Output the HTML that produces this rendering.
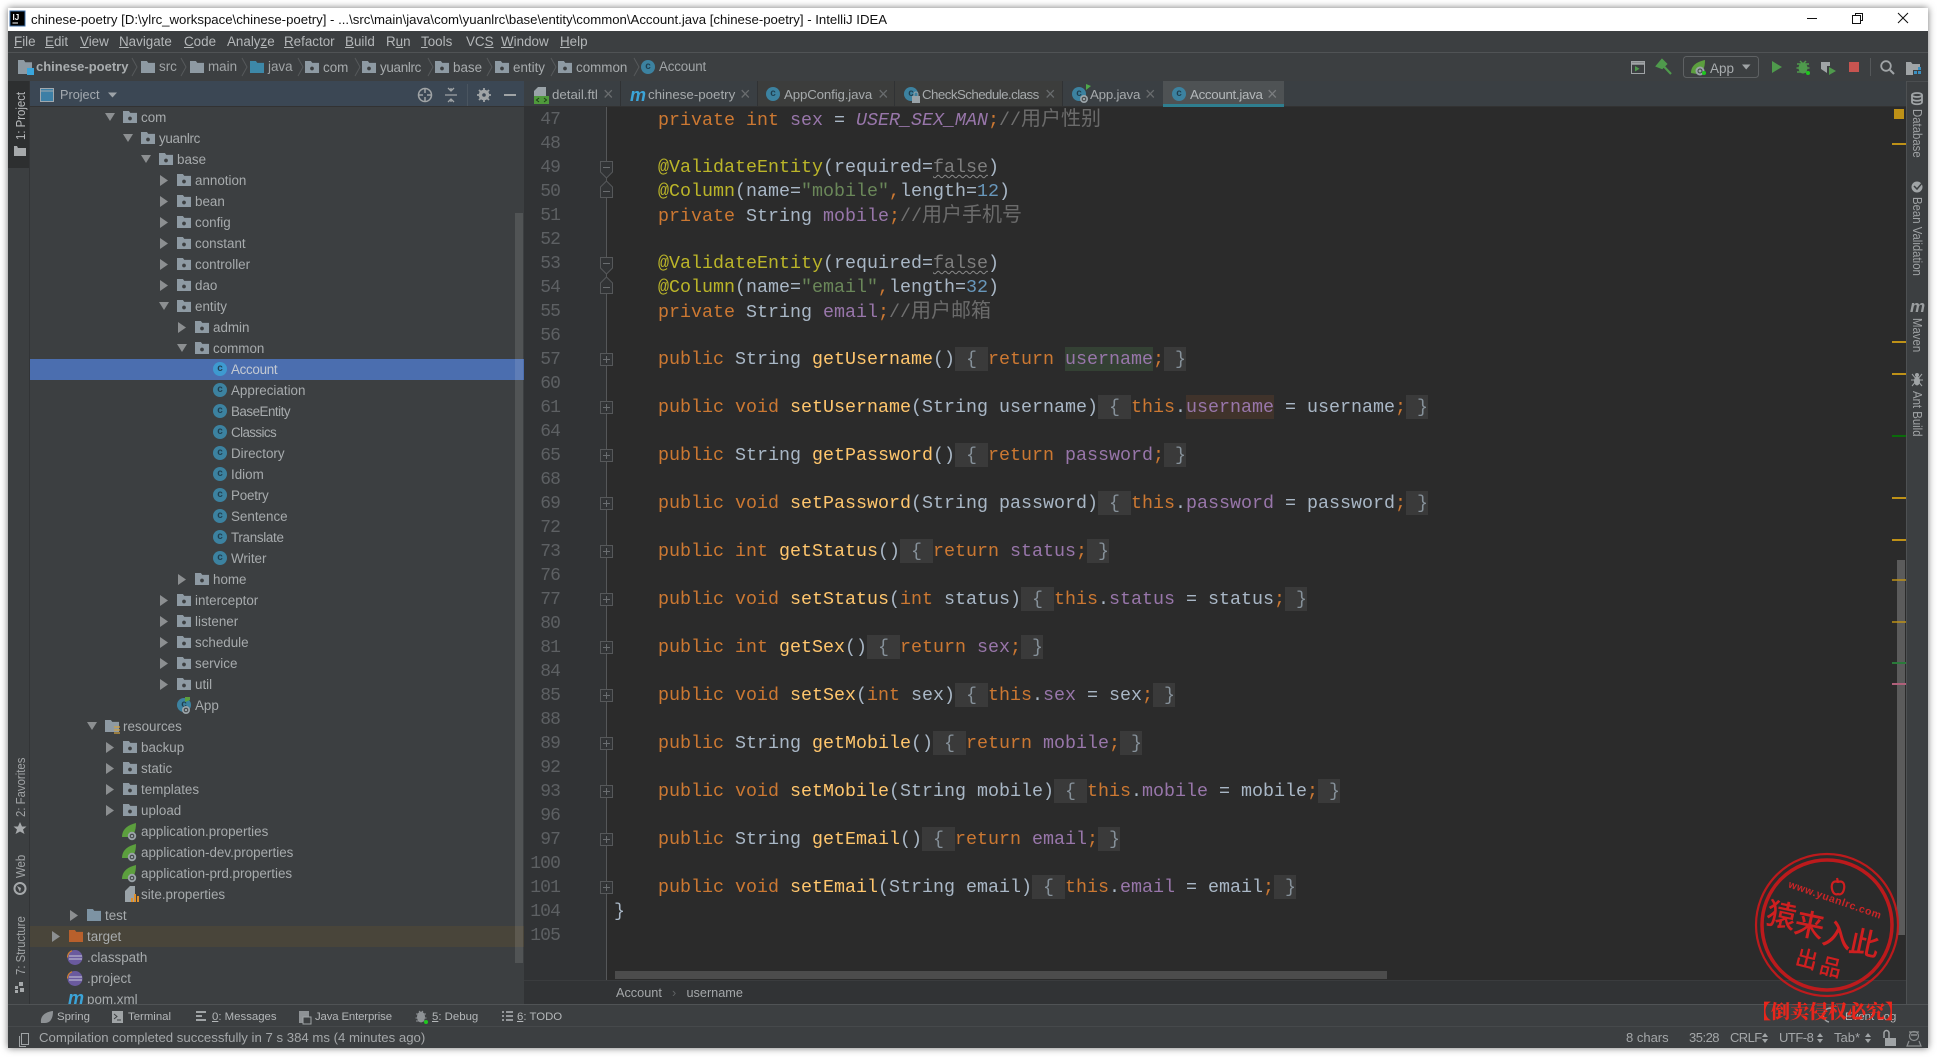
<!DOCTYPE html>
<html><head><meta charset="utf-8"><title>chinese-poetry</title>
<style>
*{box-sizing:border-box}
html,body{margin:0;padding:0;width:1937px;height:1057px;overflow:hidden;background:#fff;font-family:"Liberation Sans","Noto Sans CJK SC",sans-serif}
div,span,i{white-space:pre}
.a{position:absolute}
#win{position:absolute;left:8px;top:8px;width:1920px;height:1040px;box-shadow:0 0 7px rgba(0,0,0,.55);background:#3c3f41}
.t{position:absolute;font-size:13.4px;line-height:20px;color:#b4b7b9;white-space:pre}
.t u{text-decoration:underline}
.r{position:absolute;height:21px;width:400px}
.r span{position:absolute;left:37px;top:0;font-size:13.4px;line-height:21px;color:#a7abad}
.ar{position:absolute;left:2px;top:5px;width:8px;height:11px;background:#8c8f91;clip-path:polygon(0 0,100% 50%,0 100%)}
.ad{position:absolute;left:1px;top:6px;width:10px;height:8px;background:#8c8f91;clip-path:polygon(0 0,100% 0,50% 100%)}
.fo{position:absolute;left:19px;top:4px;width:14px;height:12px;background:radial-gradient(circle at 7px 7.5px,#3c3f41 1.6px,#8e9aa3 2.2px);clip-path:polygon(0 0,42% 0,52% 16%,100% 16%,100% 100%,0 100%)}
.fp{position:absolute;width:14px;height:12px;background:#8e9aa3;clip-path:polygon(0 0,42% 0,52% 16%,100% 16%,100% 100%,0 100%)}
.c{position:absolute;left:19px;top:3px;width:14px;height:14px;border-radius:7px;background:#3c82a0;color:#1f3f50;font:bold 10px/13px "Liberation Sans",sans-serif;text-align:center;font-style:normal}
.lf{position:absolute;left:18px;top:2px}
.l{position:absolute;left:614px;height:24px;font:18.33px/26px "Liberation Mono","Noto Sans CJK SC",monospace;color:#a9b7c6;white-space:pre}
.n{position:absolute;left:500px;width:60px;height:24px;text-align:right;font:18px/26px "Liberation Mono",monospace;letter-spacing:-.9px;color:#5d6063}
.k{color:#cc7832}.f{color:#9876aa}.m{color:#ffc66d}.an{color:#bbb529}.s{color:#6a8759}.d{color:#6897bb}
.cm{color:#707070}.cj{font-size:20px;font-family:"Noto Sans CJK SC",sans-serif;line-height:20px;color:#6b6b6b}
.fd{background:#3a3a3a;color:#86919a;display:inline-block;height:24px}
.fl{color:#7e7e7e;text-decoration:underline wavy #8a8a8a 1px;text-underline-offset:2px}
.vl{position:absolute;transform-origin:0 0;transform:rotate(-90deg) scaleX(.875);font-size:13px;line-height:16px;color:#a0a3a5;white-space:nowrap}
.vr{position:absolute;transform-origin:0 0;transform:rotate(90deg) scaleX(.875);font-size:13px;line-height:16px;color:#a0a3a5;white-space:nowrap}
.bt{font-size:11.4px;top:1007px}
.st{font-size:13px;top:1028px;color:#a4a7a9}
.x{position:absolute;top:84px;font:18px/20px "Liberation Sans",sans-serif;color:#696c6e}
.tb{font-size:13.3px;top:85px;color:#a6aaac}
.cc{position:absolute;width:14px;height:14px;border-radius:7px;background:#3c82a0;color:#1f3f50;font:bold 10px/13px "Liberation Sans",sans-serif;text-align:center;font-style:normal}
</style></head>
<body>
<div id="win"></div>

<!-- title bar -->
<div class="a" style="left:8px;top:8px;width:1920px;height:23px;background:#fff"></div>
<div class="t" style="left:31px;top:10px;color:#111;font-size:13.2px">chinese-poetry [D:\ylrc_workspace\chinese-poetry] - ...\src\main\java\com\yuanlrc\base\entity\common\Account.java [chinese-poetry] - IntelliJ IDEA</div>

<!-- menu -->
<div class="a" style="left:8px;top:52px;width:1920px;height:1px;background:#505355"></div>
<div class="t" style="left:14px;top:32px"><u>F</u>ile</div>
<div class="t" style="left:45px;top:32px"><u>E</u>dit</div>
<div class="t" style="left:80px;top:32px"><u>V</u>iew</div>
<div class="t" style="left:119px;top:32px"><u>N</u>avigate</div>
<div class="t" style="left:184px;top:32px"><u>C</u>ode</div>
<div class="t" style="left:227px;top:32px">Analy<u>z</u>e</div>
<div class="t" style="left:284px;top:32px"><u>R</u>efactor</div>
<div class="t" style="left:345px;top:32px"><u>B</u>uild</div>
<div class="t" style="left:386px;top:32px">R<u>u</u>n</div>
<div class="t" style="left:421px;top:32px"><u>T</u>ools</div>
<div class="t" style="left:466px;top:32px">VC<u>S</u></div>
<div class="t" style="left:501px;top:32px"><u>W</u>indow</div>
<div class="t" style="left:560px;top:32px"><u>H</u>elp</div>

<!-- nav bar -->
<div class="a" style="left:8px;top:81px;width:1920px;height:1px;background:#4b4e50"></div>
<i class="fp" style="left:18px;top:60px;height:14px"></i>
<i class="a" style="left:27px;top:68px;width:7px;height:7px;background:#3aa6dc"></i>
<div class="t" style="left:36px;top:57px;font-weight:bold;color:#a9adaf;font-size:13px">chinese-poetry</div>
<i class="fp" style="left:141px;top:61px"></i><div class="t" style="left:159px;top:57px;color:#a0a4a6">src</div>
<i class="fp" style="left:190px;top:61px"></i><div class="t" style="left:208px;top:57px;color:#a0a4a6">main</div>
<i class="fp" style="left:250px;top:61px;background:#3d88a8"></i><div class="t" style="left:268px;top:57px;color:#a0a4a6">java</div>
<div class="r" style="left:286px;top:57px;height:21px"><i class="fo"></i><span style="left:37px">com</span></div>
<div class="r" style="left:343px;top:57px"><i class="fo"></i><span style="letter-spacing:-.3px">yuanlrc</span></div>
<div class="r" style="left:416px;top:57px"><i class="fo"></i><span>base</span></div>
<div class="r" style="left:476px;top:57px"><i class="fo"></i><span>entity</span></div>
<div class="r" style="left:539px;top:57px"><i class="fo"></i><span>common</span></div>
<i class="cc" style="left:641px;top:60px">c</i>
<div class="t" style="left:659px;top:57px;color:#a0a4a6;letter-spacing:-.2px">Account</div>

<!-- left strip + active button -->
<div class="a" style="left:29px;top:81px;width:1px;height:923px;background:#323436"></div>
<div class="a" style="left:8px;top:81px;width:21px;height:87px;background:#2d2f30"></div>
<div class="vl" style="left:13px;top:140px;color:#b6b8ba">1: Project</div>
<div class="vl" style="left:13px;top:817px">2: Favorites</div>
<div class="vl" style="left:13px;top:878px">Web</div>
<div class="vl" style="left:13px;top:975px">7: Structure</div>

<!-- project panel header -->
<div class="a" style="left:30px;top:81px;width:494px;height:26px;background:#3b4754"></div>
<div class="a" style="left:30px;top:106px;width:494px;height:1px;background:#323232"></div>
<div class="t" style="left:60px;top:85px;font-size:12.7px;color:#a4aab0">Project</div>

<!-- tree -->
<div class="a" style="left:30px;top:359px;width:494px;height:21px;background:#4b6eaf"></div>
<div class="a" style="left:30px;top:926px;width:494px;height:21px;background:#49453a"></div>
<div class="a" style="left:0;top:0;width:524px;height:1004px;overflow:hidden">
<div class="r" style="top:107px;left:104px"><i class="ad"></i><i class="fo"></i><span>com</span></div>
<div class="r" style="top:128px;left:122px"><i class="ad"></i><i class="fo"></i><span style="letter-spacing:-.3px">yuanlrc</span></div>
<div class="r" style="top:149px;left:140px"><i class="ad"></i><i class="fo"></i><span>base</span></div>
<div class="r" style="top:170px;left:158px"><i class="ar"></i><i class="fo"></i><span>annotion</span></div>
<div class="r" style="top:191px;left:158px"><i class="ar"></i><i class="fo"></i><span>bean</span></div>
<div class="r" style="top:212px;left:158px"><i class="ar"></i><i class="fo"></i><span>config</span></div>
<div class="r" style="top:233px;left:158px"><i class="ar"></i><i class="fo"></i><span>constant</span></div>
<div class="r" style="top:254px;left:158px"><i class="ar"></i><i class="fo"></i><span>controller</span></div>
<div class="r" style="top:275px;left:158px"><i class="ar"></i><i class="fo"></i><span>dao</span></div>
<div class="r" style="top:296px;left:158px"><i class="ad"></i><i class="fo"></i><span>entity</span></div>
<div class="r" style="top:317px;left:176px"><i class="ar"></i><i class="fo"></i><span>admin</span></div>
<div class="r" style="top:338px;left:176px"><i class="ad"></i><i class="fo"></i><span>common</span></div>
<div class="r" style="top:359px;left:194px"><i class="c" style="background:#3e9ad0">c</i><span style="color:#c3c9d2;letter-spacing:-.3px">Account</span></div>
<div class="r" style="top:380px;left:194px"><i class="c">c</i><span>Appreciation</span></div>
<div class="r" style="top:401px;left:194px"><i class="c">c</i><span style="letter-spacing:-.5px">BaseEntity</span></div>
<div class="r" style="top:422px;left:194px"><i class="c">c</i><span style="letter-spacing:-.6px">Classics</span></div>
<div class="r" style="top:443px;left:194px"><i class="c">c</i><span>Directory</span></div>
<div class="r" style="top:464px;left:194px"><i class="c">c</i><span>Idiom</span></div>
<div class="r" style="top:485px;left:194px"><i class="c">c</i><span style="letter-spacing:-.2px">Poetry</span></div>
<div class="r" style="top:506px;left:194px"><i class="c">c</i><span>Sentence</span></div>
<div class="r" style="top:527px;left:194px"><i class="c">c</i><span style="letter-spacing:-.3px">Translate</span></div>
<div class="r" style="top:548px;left:194px"><i class="c">c</i><span>Writer</span></div>
<div class="r" style="top:569px;left:176px"><i class="ar"></i><i class="fo"></i><span>home</span></div>
<div class="r" style="top:590px;left:158px"><i class="ar"></i><i class="fo"></i><span>interceptor</span></div>
<div class="r" style="top:611px;left:158px"><i class="ar"></i><i class="fo"></i><span>listener</span></div>
<div class="r" style="top:632px;left:158px"><i class="ar"></i><i class="fo"></i><span>schedule</span></div>
<div class="r" style="top:653px;left:158px"><i class="ar"></i><i class="fo"></i><span>service</span></div>
<div class="r" style="top:674px;left:158px"><i class="ar"></i><i class="fo"></i><span>util</span></div>
<div class="r" style="top:695px;left:158px"><i class="c">c</i><svg class="lf" width="16" height="18" viewBox="0 0 16 18"><path d="M9 0L14 0L14 3L9 5Z" fill="#5c9f3e"/><circle cx="10" cy="13" r="4" fill="#9aa3a8"/><circle cx="10" cy="13" r="1.8" fill="none" stroke="#3c3f41"/></svg><span>App</span></div>
<div class="r" style="top:716px;left:86px"><i class="ad"></i><i class="fp" style="left:19px;top:4px"></i><svg class="a" style="left:27px;top:10px" width="8" height="9"><path d="M1 1H7M1 4H7M1 7H7" stroke="#d0a040" stroke-width="1.3"/></svg><span>resources</span></div>
<div class="r" style="top:737px;left:104px"><i class="ar"></i><i class="fo"></i><span>backup</span></div>
<div class="r" style="top:758px;left:104px"><i class="ar"></i><i class="fo"></i><span>static</span></div>
<div class="r" style="top:779px;left:104px"><i class="ar"></i><i class="fo"></i><span>templates</span></div>
<div class="r" style="top:800px;left:104px"><i class="ar"></i><i class="fo"></i><span>upload</span></div>
<div class="r" style="top:821px;left:104px"><svg class="lf" width="16" height="18" viewBox="0 0 16 18"><path d="M0 14C0 6 6 2 14 0C14 8 12 13 6 14Z" fill="#5c9f3e"/><circle cx="10" cy="13" r="4.2" fill="#9aa3a8"/><circle cx="10" cy="13" r="1.8" fill="none" stroke="#3c3f41"/></svg><span>application.properties</span></div>
<div class="r" style="top:842px;left:104px"><svg class="lf" width="16" height="18" viewBox="0 0 16 18"><path d="M0 14C0 6 6 2 14 0C14 8 12 13 6 14Z" fill="#5c9f3e"/><circle cx="10" cy="13" r="4.2" fill="#9aa3a8"/><circle cx="10" cy="13" r="1.8" fill="none" stroke="#3c3f41"/></svg><span>application-dev.properties</span></div>
<div class="r" style="top:863px;left:104px"><svg class="lf" width="16" height="18" viewBox="0 0 16 18"><path d="M0 14C0 6 6 2 14 0C14 8 12 13 6 14Z" fill="#5c9f3e"/><circle cx="10" cy="13" r="4.2" fill="#9aa3a8"/><circle cx="10" cy="13" r="1.8" fill="none" stroke="#3c3f41"/></svg><span>application-prd.properties</span></div>
<div class="r" style="top:884px;left:104px"><svg class="a" style="left:21px;top:2px" width="14" height="18"><path d="M5 0H10V16H0V5Z" fill="#9aa3a8"/><path d="M7 16V12M10 16V8M13 16V10" stroke="#e0902a" stroke-width="2"/></svg><span>site.properties</span></div>
<div class="r" style="top:905px;left:68px"><i class="ar"></i><i class="fp" style="left:19px;top:4px;background:#7d93a3"></i><span>test</span></div>
<div class="r" style="top:926px;left:50px"><i class="ar"></i><i class="fp" style="left:19px;top:4px;background:#b8602c"></i><span>target</span></div>
<div class="r" style="top:947px;left:50px"><svg class="a" style="left:17px;top:3px" width="16" height="15"><circle cx="8" cy="7.5" r="7.5" fill="#6a5a9e"/><path d="M.5 7.5A7.5 7.5 0 0 1 5 .7" fill="none" stroke="#d08030" stroke-width="1.2"/><path d="M2 6H15M2 9H15" stroke="#c8c8d8" stroke-width="1"/></svg><span>.classpath</span></div>
<div class="r" style="top:968px;left:50px"><svg class="a" style="left:17px;top:3px" width="16" height="15"><circle cx="8" cy="7.5" r="7.5" fill="#6a5a9e"/><path d="M.5 7.5A7.5 7.5 0 0 1 5 .7" fill="none" stroke="#d08030" stroke-width="1.2"/><path d="M2 6H15M2 9H15" stroke="#c8c8d8" stroke-width="1"/></svg><span>.project</span></div>
<div class="r" style="top:989px;left:50px"><div class="a" style="left:18px;top:-2px;font:italic bold 18px/22px 'Liberation Sans',sans-serif;color:#3ba4d8;letter-spacing:-1px">m</div><span>pom.xml</span></div>
</div>
<div class="a" style="left:515px;top:213px;width:8px;height:750px;background:rgba(255,255,255,.11)"></div>

<!-- tab bar -->
<div class="a" style="left:524px;top:81px;width:1382px;height:26px;background:#3a3f43"></div>
<div class="a" style="left:524px;top:106px;width:1382px;height:1px;background:#323232"></div>
<div class="a" style="left:757px;top:81px;width:305px;height:25px;background:#3c3d3c"></div>
<div class="a" style="left:1163px;top:81px;width:121px;height:26px;background:#4e5254"></div>
<div class="a" style="left:1163px;top:104px;width:121px;height:3px;background:#2f7e8f"></div>
<div class="a" style="left:620px;top:81px;width:1px;height:25px;background:#303234"></div>
<div class="a" style="left:757px;top:81px;width:1px;height:25px;background:#303234"></div>
<div class="a" style="left:894px;top:81px;width:1px;height:25px;background:#303234"></div>
<div class="a" style="left:1062px;top:81px;width:1px;height:25px;background:#303234"></div>
<div class="t tb" style="left:552px">detail.ftl</div><div class="x" style="left:603px">×</div>
<div class="a" style="left:630px;top:84px;font:italic bold 18px/22px 'Liberation Sans',sans-serif;color:#3ba4d8;letter-spacing:-1px">m</div>
<div class="t tb" style="left:648px">chinese-poetry</div><div class="x" style="left:740px">×</div>
<i class="cc" style="left:766px;top:87px">c</i>
<div class="t tb" style="left:784px;letter-spacing:-.15px">AppConfig.java</div><div class="x" style="left:878px">×</div>
<i class="cc" style="left:904px;top:87px">c</i>
<div class="t tb" style="left:922px;letter-spacing:-.55px">CheckSchedule.class</div><div class="x" style="left:1045px">×</div>
<i class="cc" style="left:1072px;top:87px">c</i>
<div class="t tb" style="left:1090px;letter-spacing:-.2px">App.java</div><div class="x" style="left:1145px">×</div>
<i class="cc" style="left:1172px;top:87px">c</i>
<div class="t tb" style="left:1190px;color:#b4b8ba;letter-spacing:-.3px">Account.java</div><div class="x" style="left:1267px;color:#7a7d7f">×</div>

<!-- gutter + editor -->
<div class="a" style="left:524px;top:107px;width:83px;height:873px;background:#313335"></div>
<div class="a" style="left:607px;top:107px;width:1299px;height:873px;background:#2b2b2b"></div>
<div class="a" style="left:606px;top:107px;width:1px;height:873px;background:#555759"></div>

<div class="n" style="top:107px">47</div><div class="n" style="top:131px">48</div><div class="n" style="top:155px">49</div><div class="n" style="top:179px">50</div><div class="n" style="top:203px">51</div><div class="n" style="top:227px">52</div><div class="n" style="top:251px">53</div><div class="n" style="top:275px">54</div><div class="n" style="top:299px">55</div><div class="n" style="top:323px">56</div><div class="n" style="top:347px">57</div><div class="n" style="top:371px">60</div><div class="n" style="top:395px">61</div><div class="n" style="top:419px">64</div><div class="n" style="top:443px">65</div><div class="n" style="top:467px">68</div><div class="n" style="top:491px">69</div><div class="n" style="top:515px">72</div><div class="n" style="top:539px">73</div><div class="n" style="top:563px">76</div><div class="n" style="top:587px">77</div><div class="n" style="top:611px">80</div><div class="n" style="top:635px">81</div><div class="n" style="top:659px">84</div><div class="n" style="top:683px">85</div><div class="n" style="top:707px">88</div><div class="n" style="top:731px">89</div><div class="n" style="top:755px">92</div><div class="n" style="top:779px">93</div><div class="n" style="top:803px">96</div><div class="n" style="top:827px">97</div><div class="n" style="top:851px">100</div><div class="n" style="top:875px">101</div><div class="n" style="top:899px">104</div><div class="n" style="top:923px">105</div>

<div class="l" style="top:107px;line-height:24px">    <span class="k">private int</span> <span class="f">sex</span> = <span class="f" style="font-style:italic">USER_SEX_MAN</span><span class="k">;</span><span class="cm">//</span><span class="cj">用户性别</span></div>
<div class="l" style="top:155px">    <span class="an">@ValidateEntity</span>(required=<span class="fl">false</span>)</div>
<div class="l" style="top:179px">    <span class="an">@Column</span>(name=<span class="s">"mobile"</span><span class="k">,</span>length=<span class="d">12</span>)</div>
<div class="l" style="top:203px;line-height:24px">    <span class="k">private</span> String <span class="f">mobile</span><span class="k">;</span><span class="cm">//</span><span class="cj">用户手机号</span></div>
<div class="l" style="top:251px">    <span class="an">@ValidateEntity</span>(required=<span class="fl">false</span>)</div>
<div class="l" style="top:275px">    <span class="an">@Column</span>(name=<span class="s">"email"</span><span class="k">,</span>length=<span class="d">32</span>)</div>
<div class="l" style="top:299px;line-height:24px">    <span class="k">private</span> String <span class="f">email</span><span class="k">;</span><span class="cm">//</span><span class="cj">用户邮箱</span></div>
<div class="l" style="top:347px">    <span class="k">public</span> String <span class="m">getUsername</span>()<span class="fd"> { </span><span class="k">return</span> <span class="f" style="background:#344134;display:inline-block;height:24px">username</span><span class="k">;</span><span class="fd"> }</span></div>
<div class="l" style="top:395px">    <span class="k">public void</span> <span class="m">setUsername</span>(String username)<span class="fd"> { </span><span class="k">this</span>.<span class="f" style="background:#40332b;display:inline-block;height:24px">username</span> = username<span class="k">;</span><span class="fd"> }</span></div>
<div class="l" style="top:443px">    <span class="k">public</span> String <span class="m">getPassword</span>()<span class="fd"> { </span><span class="k">return</span> <span class="f">password</span><span class="k">;</span><span class="fd"> }</span></div>
<div class="l" style="top:491px">    <span class="k">public void</span> <span class="m">setPassword</span>(String password)<span class="fd"> { </span><span class="k">this</span>.<span class="f">password</span> = password<span class="k">;</span><span class="fd"> }</span></div>
<div class="l" style="top:539px">    <span class="k">public int</span> <span class="m">getStatus</span>()<span class="fd"> { </span><span class="k">return</span> <span class="f">status</span><span class="k">;</span><span class="fd"> }</span></div>
<div class="l" style="top:587px">    <span class="k">public void</span> <span class="m">setStatus</span>(<span class="k">int</span> status)<span class="fd"> { </span><span class="k">this</span>.<span class="f">status</span> = status<span class="k">;</span><span class="fd"> }</span></div>
<div class="l" style="top:635px">    <span class="k">public int</span> <span class="m">getSex</span>()<span class="fd"> { </span><span class="k">return</span> <span class="f">sex</span><span class="k">;</span><span class="fd"> }</span></div>
<div class="l" style="top:683px">    <span class="k">public void</span> <span class="m">setSex</span>(<span class="k">int</span> sex)<span class="fd"> { </span><span class="k">this</span>.<span class="f">sex</span> = sex<span class="k">;</span><span class="fd"> }</span></div>
<div class="l" style="top:731px">    <span class="k">public</span> String <span class="m">getMobile</span>()<span class="fd"> { </span><span class="k">return</span> <span class="f">mobile</span><span class="k">;</span><span class="fd"> }</span></div>
<div class="l" style="top:779px">    <span class="k">public void</span> <span class="m">setMobile</span>(String mobile)<span class="fd"> { </span><span class="k">this</span>.<span class="f">mobile</span> = mobile<span class="k">;</span><span class="fd"> }</span></div>
<div class="l" style="top:827px">    <span class="k">public</span> String <span class="m">getEmail</span>()<span class="fd"> { </span><span class="k">return</span> <span class="f">email</span><span class="k">;</span><span class="fd"> }</span></div>
<div class="l" style="top:875px">    <span class="k">public void</span> <span class="m">setEmail</span>(String email)<span class="fd"> { </span><span class="k">this</span>.<span class="f">email</span> = email<span class="k">;</span><span class="fd"> }</span></div>
<div class="l" style="top:899px">}</div>

<!-- editor scrollbars -->
<div class="a" style="left:615px;top:971px;width:772px;height:8px;background:#4c4c4c"></div>
<div class="a" style="left:1897px;top:560px;width:8px;height:375px;background:#5b5b5b"></div>

<!-- editor breadcrumb -->
<div class="a" style="left:524px;top:980px;width:1382px;height:24px;background:#313335;border-top:1px solid #3a3c3e"></div>
<div class="t" style="left:616px;top:983px;font-size:12.7px;color:#a4a7a9">Account</div>
<div class="t" style="left:672px;top:983px;font-size:12.7px;color:#5f6264">›</div>
<div class="t" style="left:686.5px;top:983px;font-size:12.7px;color:#a4a7a9">username</div>

<!-- right strip -->
<div class="a" style="left:1906px;top:81px;width:1px;height:923px;background:#4e5153"></div>
<div class="vr" style="left:1925px;top:109px">Database</div>
<div class="vr" style="left:1925px;top:197px">Bean Validation</div>
<div class="vr" style="left:1925px;top:318px">Maven</div>
<div class="vr" style="left:1925px;top:391px">Ant Build</div>
<div class="a" style="left:1910px;top:297px;font:italic bold 17px/20px 'Liberation Sans',sans-serif;color:#9a9d9f;letter-spacing:-1px">m</div>

<!-- bottom bars -->
<div class="a" style="left:8px;top:1004px;width:1920px;height:1px;background:#505355"></div>
<div class="a" style="left:8px;top:1026px;width:1920px;height:1px;background:#46494b"></div>
<div class="t bt" style="left:57px">Spring</div>
<div class="t bt" style="left:128px">Terminal</div>
<div class="t bt" style="left:212px"><u>0</u>: Messages</div>
<div class="t bt" style="left:315px;letter-spacing:-.15px">Java Enterprise</div>
<div class="t bt" style="left:432px"><u>5</u>: Debug</div>
<div class="t bt" style="left:517px"><u>6</u>: TODO</div>
<div class="t st" style="left:39px;font-size:13.2px">Compilation completed successfully in 7 s 384 ms (4 minutes ago)</div>
<div class="t st" style="left:1626px">8 chars</div>
<div class="t st" style="left:1689px;letter-spacing:-.5px">35:28</div>
<div class="t st" style="left:1730px;letter-spacing:-.6px">CRLF</div>
<div class="t st" style="left:1779px;letter-spacing:-.5px">UTF-8</div>
<div class="t st" style="left:1834px">Tab*</div>
<div class="t bt" style="left:1845px">Event Log</div>

<!-- icon overlay -->
<svg class="a" style="left:0;top:0" width="1937" height="1057" viewBox="0 0 1937 1057">
<!-- title logo -->
<rect x="10" y="11" width="15" height="15" fill="#000" stroke="#3d6fa8"/>
<text x="12.5" y="20" font-family="Liberation Sans" font-size="8" font-weight="bold" fill="#fff">IJ</text>
<path d="M12.5 23H18" stroke="#fff"/>
<!-- window controls -->
<path d="M1807 18.500H1817" stroke="#111" stroke-width="1"/>
<path d="M1852.500 15.500H1860.500V23.500H1852.500ZM1855.500 15.500V13.500H1862.500V20.500H1860.500" fill="none" stroke="#111"/>
<path d="M1898 13L1908 23M1908 13L1898 23" stroke="#111" fill="none"/>
<!-- nav chevrons -->
<g fill="none" stroke="#56595b"><path d="M132 58L137 67L132 76M181 58L186 67L181 76M242 58L247 67L242 76M298 58L303 67L298 76M355 58L360 67L355 76M428 58L433 67L428 76M487 58L492 67L487 76M551 58L556 67L551 76M634 58L639 67L634 76"/></g>
<!-- left strip icons -->
<path d="M14 146H17L18 148H26V156H14Z" fill="#a6a9ab"/>
<path d="M20 822L22 826.500H26.500L23 829.500L24.500 834L20 831.500L15.500 834L17 829.500L13.500 826.500H18Z" fill="#a6a9ab"/>
<circle cx="20" cy="888.500" r="5.500" fill="none" stroke="#a6a9ab" stroke-width="2"/><path d="M17 886L21 888L20 892Z" fill="#a6a9ab"/>
<path d="M15 986h3v3h-3zM19 982h4v4h-4zM15 990h3v3h-3zM20 988h4v4h-4z" fill="#a6a9ab"/>
<!-- project header -->
<rect x="40.500" y="88.500" width="13" height="13" fill="#3c7fa6" stroke="#a0a8ae"/><path d="M41 91H53" stroke="#a0a8ae"/>
<path d="M108 92.500H117L112.500 97.500Z" fill="#9da3a8"/>
<circle cx="425" cy="95" r="6.500" fill="none" stroke="#a0a4a6" stroke-width="1.500"/><path d="M425 88V93M425 97V102M418 95H423M427 95H432" stroke="#a0a4a6" stroke-width="1.500"/>
<path d="M445 95H457M448 88L451 91L454 88M448 102L451 99L454 102M451 88V91M451 99V102" stroke="#a0a4a6" stroke-width="1.300" fill="none"/>
<path d="M467.500 84V106" stroke="#4a5560"/>
<circle cx="484" cy="95" r="3.800" fill="none" stroke="#a0a4a6" stroke-width="3"/><path d="M484 88V102M477 95H491M479 90L489 100M489 90L479 100" stroke="#a0a4a6" stroke-width="1.800"/><circle cx="484" cy="95" r="1.800" fill="#3b4754"/>
<path d="M504 95H516" stroke="#a0a4a6" stroke-width="2"/>
<!-- tab icons -->
<path d="M538 87H546V96H534V91Z" fill="#9aa3a8"/><rect x="534" y="96" width="15" height="8" fill="#4f9a3c"/><path d="M539 98L536.500 100L539 102M544 98L546.500 100L544 102" fill="none" stroke="#1f3d18"/>
<path d="M1086 84L1091 86L1086 90Z" fill="#4ea84a"/><circle cx="1084" cy="99" r="4" fill="#9aa3a8"/><circle cx="1084" cy="99" r="1.800" fill="none" stroke="#3c3f41"/>
<path d="M912 96H920V103H912Z" fill="#9aa3a8"/><path d="M914 96V94a2 2 0 0 1 4 0V96" fill="none" stroke="#9aa3a8"/>
<!-- toolbar icons -->
<rect x="1631.500" y="61.500" width="13" height="12" fill="none" stroke="#a0a4a6"/><path d="M1631 63.500H1645" stroke="#a0a4a6" stroke-width="2.500"/><path d="M1635 66V71.500L1639.500 68.700Z" fill="#4f9a4c"/>
<path d="M1657 66L1662 60L1666 64L1662 68ZM1662.500 65L1671 74" fill="#4f9a4c" stroke="#4f9a4c" stroke-width="2.200"/>
<rect x="1683.500" y="56.500" width="75" height="21" rx="3" fill="none" stroke="#5e6163"/>
<path d="M1691 73C1691 66 1696 62 1705 60C1705 68 1703 73 1697 74Z" fill="#5c9f3e"/><circle cx="1700" cy="71" r="4.500" fill="#9aa3a8"/><circle cx="1700" cy="71" r="2" fill="none" stroke="#3c3f41"/><circle cx="1704" cy="73" r="2" fill="#1ec81e"/>
<text x="1710" y="73" font-family="Liberation Sans" font-size="13.500" fill="#a8acae">App</text>
<path d="M1742 64.500H1750.500L1746.200 69.500Z" fill="#a0a4a6"/>
<path d="M1772 61V73L1782 67Z" fill="#4f9a4c"/>
<ellipse cx="1803" cy="68" rx="4.500" ry="5.500" fill="#4f9a4c"/><path d="M1797 64H1809M1796.500 68H1809.500M1797 72H1809M1800 61L1802 63M1806 61L1804 63" stroke="#4f9a4c" stroke-width="1.500"/><circle cx="1808" cy="73" r="2" fill="#1ec81e"/>
<path d="M1821 62H1830V66H1827V73L1821 69Z" fill="#a0a4a6"/><path d="M1829 67V75L1836 71Z" fill="#4f9a4c"/>
<rect x="1849" y="62" width="10" height="10" fill="#c75450"/>
<path d="M1870.500 58V76" stroke="#55585a"/>
<circle cx="1886" cy="66" r="4.800" fill="none" stroke="#a0a4a6" stroke-width="1.800"/><path d="M1890 70L1894 74" stroke="#a0a4a6" stroke-width="2"/>
<path d="M1906 62H1911L1912.500 64H1920V70H1913V75H1906Z" fill="#a0a4a6"/><rect x="1914" y="71" width="3" height="3" fill="#3a8fbf"/><rect x="1918" y="71" width="3" height="3" fill="#3a8fbf"/><rect x="1918" y="67" width="3" height="3" fill="#3a8fbf"/>
<!-- gutter folds -->
<g fill="#313335" stroke="#56585a">
<path d="M600.500 161.500H612.500V172L606.500 178L600.500 172Z"/><path d="M600.500 197.500H612.500V187L606.500 181L600.500 187Z"/>
<path d="M600.500 257.500H612.500V268L606.500 274L600.500 268Z"/><path d="M600.500 293.500H612.500V283L606.500 277L600.500 283Z"/>
<rect x="600.500" y="353.500" width="12" height="12"/><rect x="600.500" y="401.500" width="12" height="12"/><rect x="600.500" y="449.500" width="12" height="12"/><rect x="600.500" y="497.500" width="12" height="12"/><rect x="600.500" y="545.500" width="12" height="12"/><rect x="600.500" y="593.500" width="12" height="12"/><rect x="600.500" y="641.500" width="12" height="12"/><rect x="600.500" y="689.500" width="12" height="12"/><rect x="600.500" y="737.500" width="12" height="12"/><rect x="600.500" y="785.500" width="12" height="12"/><rect x="600.500" y="833.500" width="12" height="12"/><rect x="600.500" y="881.500" width="12" height="12"/>
</g>
<g stroke="#6a6d70" fill="none">
<path d="M603 167.500H610M603 191.500H610M603 263.500H610M603 287.500H610"/>
<path d="M603 359.500H610M606.500 356V363M603 407.500H610M606.500 404V411M603 455.500H610M606.500 452V459M603 503.500H610M606.500 500V507M603 551.500H610M606.500 548V555M603 599.500H610M606.500 596V603M603 647.500H610M606.500 644V651M603 695.500H610M606.500 692V699M603 743.500H610M606.500 740V747M603 791.500H610M606.500 788V795M603 839.500H610M606.500 836V843M603 887.500H610M606.500 884V891"/>
</g>
<!-- error stripes -->
<rect x="1894" y="109" width="10" height="10" fill="#be9117"/>
<g fill="#be9117"><rect x="1892" y="143" width="14" height="2"/><rect x="1892" y="341" width="14" height="2"/><rect x="1892" y="373" width="14" height="2"/><rect x="1892" y="497" width="14" height="2"/><rect x="1892" y="539" width="14" height="2"/><rect x="1892" y="579" width="14" height="2" opacity=".75"/><rect x="1892" y="621" width="14" height="2" opacity=".75"/></g>
<rect x="1892" y="435" width="14" height="2" fill="#0a6b0a"/><rect x="1892" y="662" width="14" height="2" fill="#2a7a3a"/><rect x="1892" y="683" width="14" height="2" fill="#b0607a"/>
<!-- right strip icons -->
<g fill="none" stroke="#a0a4a6" stroke-width="1.800"><ellipse cx="1917" cy="95" rx="5" ry="2"/><path d="M1912 95V102c0 3 10 3 10 0V95M1912 98.500c0 3 10 3 10 0"/></g>
<circle cx="1917" cy="187" r="5.500" fill="#a0a4a6"/><path d="M1914 186L1917 189L1923 182" stroke="#3c3f41" stroke-width="1.500" fill="none"/>
<ellipse cx="1917" cy="381" rx="3" ry="4.500" fill="#a0a4a6"/><circle cx="1917" cy="375" r="2" fill="#a0a4a6"/><path d="M1912 374L1922 386M1922 374L1912 386M1911 380H1923" stroke="#a0a4a6"/>
<!-- bottom toolbar icons -->
<path d="M41 1023C40 1016 45 1012 53 1011C53 1019 50 1023 45 1023Z" fill="#8e9295"/>
<rect x="112" y="1011" width="11" height="12" fill="#a0a4a6"/><path d="M114 1014L117 1016.500L114 1019M117 1020H121" fill="none" stroke="#3c3f41"/>
<path d="M196 1012H206M196 1016H202M196 1020H206" stroke="#a0a4a6" stroke-width="2"/>
<path d="M299 1011H309V1023H299Z" fill="#8e9295"/><rect x="303" y="1017" width="8" height="7" fill="#3c3f41" stroke="#a0a4a6"/>
<ellipse cx="421" cy="1017" rx="4" ry="5.500" fill="#8e9295"/><path d="M416 1014H426M415.500 1018H426.500M416 1021H426M419 1011L420 1012M423 1011L422 1012" stroke="#8e9295"/><circle cx="426" cy="1022" r="2" fill="#1ec81e"/>
<path d="M502 1012H504M502 1016H504M502 1020H504M506 1012H513M506 1016H513M506 1020H513" stroke="#a0a4a6" stroke-width="1.800"/>
<!-- status icons -->
<rect x="21.500" y="1033.500" width="7" height="11" fill="none" stroke="#a0a4a6"/><path d="M19.500 1036V1046.500H26" fill="none" stroke="#a0a4a6"/>
<g fill="#a0a4a6"><path d="M1762 1037L1765 1033L1768 1037ZM1762 1039L1765 1043L1768 1039Z"/><path d="M1817 1037L1820 1033L1823 1037ZM1817 1039L1820 1043L1823 1039Z"/><path d="M1865 1037L1868 1033L1871 1037ZM1865 1039L1868 1043L1871 1039Z"/></g>
<rect x="1885" y="1038" width="11" height="8" fill="#a0a4a6"/><path d="M1884 1038V1033a2.500 2.500 0 0 1 5 0V1038" fill="none" stroke="#a0a4a6" stroke-width="1.500"/>
<circle cx="1914" cy="1036" r="4.500" fill="none" stroke="#8c8f91" stroke-width="1.200"/><path d="M1909 1032H1919M1909 1041L1907 1046H1921L1919 1041" fill="none" stroke="#8c8f91" stroke-width="1.200"/><path d="M1911 1035H1917" stroke="#8c8f91" stroke-width="1.500"/>
<path d="M1836 1012A7 7 0 1 0 1829 1023" fill="none" stroke="#a0a4a6" stroke-width="1.500" transform="translate(0,-1)"/>
<!-- stamp -->
<g fill="none" stroke="#c9191b" opacity=".92">
<circle cx="1827" cy="925" r="71" stroke-width="2.200"/>
<circle cx="1827" cy="925" r="65" stroke-width="3.500"/>
</g>
<g font-family="'Noto Sans CJK SC',sans-serif" font-weight="500" fill="#cf1f20">
<text transform="translate(1782,913) rotate(12)" font-size="30" text-anchor="middle" dominant-baseline="central">猿</text>
<text transform="translate(1810,923) rotate(12)" font-size="30" text-anchor="middle" dominant-baseline="central">来</text>
<text transform="translate(1838,933) rotate(12)" font-size="30" text-anchor="middle" dominant-baseline="central">入</text>
<text transform="translate(1865,941) rotate(12)" font-size="30" text-anchor="middle" dominant-baseline="central">此</text>
<text transform="translate(1807,958) rotate(14)" font-size="22" text-anchor="middle" dominant-baseline="central">出</text>
<text transform="translate(1831,966) rotate(14)" font-size="22" text-anchor="middle" dominant-baseline="central">品</text>
</g>
<text transform="translate(1834,903) rotate(19)" font-family="'Liberation Sans',sans-serif" font-size="10.500" font-weight="bold" fill="#c92527" text-anchor="middle" letter-spacing=".6">www.yuanlrc.com</text>
<path d="M1838 882C1833 880 1831 884 1832 889C1833 894 1836 895 1838 894C1840 895 1843 894 1844 889C1845 884 1843 880 1838 882ZM1838 882L1837 878" fill="none" stroke="#cf1f20" stroke-width="2.200"/>
<text x="1752" y="1018" font-family="'Noto Serif CJK SC',serif" font-weight="900" font-size="19" fill="#e8261c">【倒卖侵权必究】</text>
</svg>
</body></html>
